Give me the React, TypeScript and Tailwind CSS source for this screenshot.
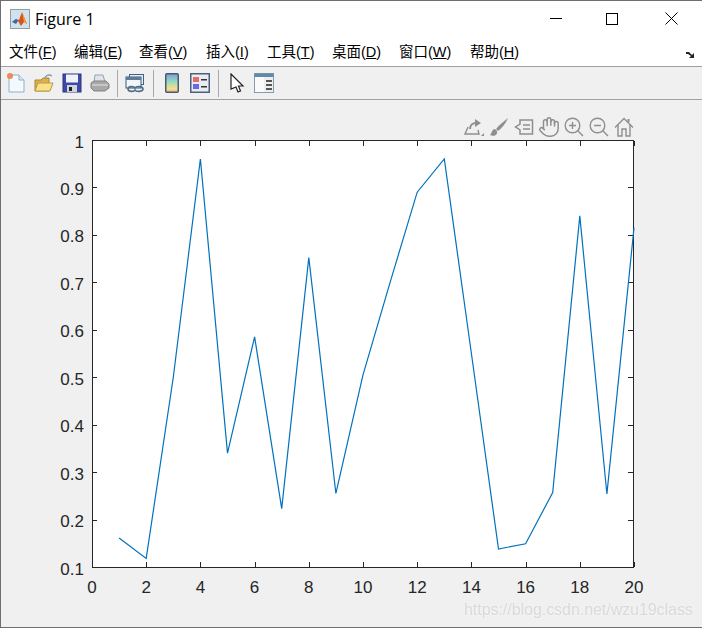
import { Hand } from "lucide-react";
import type { ReactNode } from "react";

const menus: [string, string, string][] = [
  ["文件", "F", "w-[65px]"],
  ["编辑", "E", "w-[65px]"],
  ["查看", "V", "w-[67px]"],
  ["插入", "I", "w-[61px]"],
  ["工具", "T", "w-[65px]"],
  ["桌面", "D", "w-[67px]"],
  ["窗口", "W", "w-[71px]"],
  ["帮助", "H", "w-[60px]"],
];

const data: [number, number][] = [
  [1, 0.161], [2, 0.118], [3, 0.5], [4, 0.96], [5, 0.34], [6, 0.585], [7, 0.223],
  [8, 0.752], [9, 0.255], [10, 0.505], [11, 0.7], [12, 0.89], [13, 0.96], [14, 0.55],
  [15, 0.138], [16, 0.149], [17, 0.257], [18, 0.84], [19, 0.254], [20, 0.815],
];

const px = (x: number) => 92 + (x / 20) * 542;
const py = (y: number) => 568 - ((y - 0.1) / 0.9) * 427;

const xTicks = [0, 2, 4, 6, 8, 10, 12, 14, 16, 18, 20];
const yTicks = [0.1, 0.2, 0.3, 0.4, 0.5, 0.6, 0.7, 0.8, 0.9, 1];

function Tool({ children, w = "w-[28px]" }: { children: ReactNode; w?: string }) {
  return <div className={`${w} flex h-full items-center justify-center`}>{children}</div>;
}

function Sep({ w }: { w: string }) {
  return (
    <div className={`${w} flex h-full items-center justify-center`}>
      <div className="h-[27px] w-px bg-[#a8a8a8]" />
    </div>
  );
}

function MatlabIcon() {
  return (
    <svg width="20" height="20" viewBox="0 0 20 20">
      <rect x="0.5" y="0.5" width="19" height="19" fill="#cfe2f0" stroke="#9a9a9a" />
      <path d="M2 13 L6 10 L9 11 L12 3 L17 15 L14 13 L11 17 L8 12 Z" fill="#d9531e" />
      <path d="M2 13 L6 10 L8 12 L6 15 Z" fill="#2f6fa8" />
      <path d="M12 3 L17 15 L14 13 Z" fill="#f0a32a" />
    </svg>
  );
}

function Toolbar() {
  return (
    <div className="flex h-[33px] items-center border-b border-[#a0a0a0] bg-[#f0f0f0] pl-px">
      <Tool>
        <svg width="20" height="22" viewBox="0 0 20 22">
          <path d="M3 3 H13 L18 8 V20 H3 Z" fill="#f4f9fd" stroke="#8fb0cc" />
          <path d="M13 3 V8 H18" fill="#d6e6f2" stroke="#8fb0cc" />
          <circle cx="4" cy="4" r="3" fill="#ee8a5a" />
        </svg>
      </Tool>
      <Tool>
        <svg width="20" height="20" viewBox="0 0 20 20">
          <path d="M1 7 H7 L9 5 H15 V18 H1 Z" fill="#dcb04a" stroke="#a9873a" />
          <path d="M1 18 L4 10 H19 L16 18 Z" fill="#fbe08a" stroke="#b89a48" />
          <path d="M11 5 C12 2 15 1 18 3" fill="none" stroke="#7f9cb4" strokeWidth="1.5" />
        </svg>
      </Tool>
      <Tool>
        <svg width="20" height="20" viewBox="0 0 20 20">
          <rect x="1" y="1" width="18" height="18" fill="#3d48a8" stroke="#2b3480" />
          <rect x="4" y="1.5" width="12" height="8" fill="#f0f2fa" />
          <rect x="5" y="12" width="10" height="7" fill="#d0d2dc" />
          <rect x="7" y="14" width="3" height="4" fill="#222" />
        </svg>
      </Tool>
      <Tool>
        <svg width="20" height="20" viewBox="0 0 20 20">
          <path d="M5 2 H13 L15 9 H4 Z" fill="#dfe5ea" stroke="#9aa2a8" />
          <path d="M1 10 L4 8 H16 L19 11 V15 L15 18 H4 L1 15 Z" fill="#a8a8a8" stroke="#808080" />
          <path d="M2 12 H18" stroke="#e4e4e4" />
        </svg>
      </Tool>
      <Sep w="w-[7px]" />
      <Tool>
        <svg width="20" height="20" viewBox="0 0 20 20">
          <rect x="4.5" y="1.5" width="14" height="10" fill="#e8eef4" stroke="#44607c" />
          <rect x="1" y="4" width="15" height="11" fill="#f2f6fa" stroke="#3c5a78" />
          <rect x="1" y="4" width="15" height="3" fill="#5c7c9c" />
          <path d="M3 16 C3 13 9 13 10 15 C11 13 18 13 18 16 C18 19 11 19 10 17 C9 19 3 19 3 16 Z" fill="none" stroke="#506c88" strokeWidth="1.6" />
        </svg>
      </Tool>
      <Sep w="w-[9px]" />
      <Tool>
        <svg width="14" height="20" viewBox="0 0 14 20">
          <defs>
            <linearGradient id="cbar" x1="0" y1="0" x2="0" y2="1">
              <stop offset="0" stopColor="#7d9fd8" />
              <stop offset="0.45" stopColor="#9adcc0" />
              <stop offset="0.8" stopColor="#f4e08a" />
              <stop offset="1" stopColor="#eeb0a0" />
            </linearGradient>
          </defs>
          <rect x="0.75" y="0.75" width="12.5" height="18.5" rx="1" fill="url(#cbar)" stroke="#4a5a70" strokeWidth="1.5" />
        </svg>
      </Tool>
      <Tool w="w-[27px]">
        <svg width="20" height="20" viewBox="0 0 20 20">
          <rect x="0.75" y="0.75" width="18.5" height="18.5" fill="#e8edf4" stroke="#4c607c" strokeWidth="1.5" />
          <rect x="3" y="4" width="6" height="5" fill="#e86a6a" />
          <rect x="3" y="11" width="6" height="5" fill="#6a6ae0" />
          <rect x="11" y="6" width="6" height="1.5" fill="#333" />
          <rect x="11" y="13" width="6" height="1.5" fill="#333" />
        </svg>
      </Tool>
      <Sep w="w-[10px]" />
      <Tool w="w-[27px]">
        <svg width="16" height="20" viewBox="0 0 16 20">
          <path d="M2 1 L14 13 H9.5 L11.5 18 L9 19 L7 14 L2 16 Z" fill="#ffffff" stroke="#222" strokeWidth="1.2" />
        </svg>
      </Tool>
      <Tool w="w-[27px]">
        <svg width="20" height="20" viewBox="0 0 20 20">
          <rect x="0.5" y="0.5" width="19" height="19" fill="#eeeeee" stroke="#8a9aa6" />
          <rect x="0.5" y="0.5" width="19" height="3.5" fill="#5f8aa8" />
          <rect x="1" y="4" width="9" height="15" fill="#fafafa" />
          <rect x="12" y="7" width="6" height="2" fill="#555" />
          <rect x="12" y="11" width="6" height="2" fill="#555" />
          <rect x="12" y="15" width="6" height="2" fill="#555" />
        </svg>
      </Tool>
    </div>
  );
}

function AxesToolbar() {
  return (
    <div className="absolute left-[460px] top-[16px] flex h-[22px] items-center text-[#8e8e8e]">
      <div className="flex w-[25px] justify-center">
        <svg width="22" height="20" viewBox="0 0 22 20" fill="none" stroke="currentColor" strokeWidth="1.4">
          <path d="M5 10 L2 17 H16 L15 13" />
          <path d="M7 12 C7 8 10 6 13 6" strokeWidth="2" />
          <path d="M12 2 L18 6 L12 10 Z" fill="currentColor" stroke="none" />
          <path d="M18 19 L21 19 L21 16 Z" fill="currentColor" stroke="none" />
        </svg>
      </div>
      <div className="flex w-[25px] justify-center">
        <svg width="20" height="20" viewBox="0 0 20 20">
          <path d="M19 1 C15 4 10 8 7 12 L9 14 C13 11 17 6 19 1 Z" fill="currentColor" />
          <path d="M6 12 C3 12 3 16 1 18 C5 20 9 18 8 14 Z" fill="currentColor" />
        </svg>
      </div>
      <div className="flex w-[25px] justify-center">
        <svg width="20" height="18" viewBox="0 0 20 18" fill="none" stroke="currentColor" strokeWidth="1.5">
          <path d="M6 2 H18.5 V16 H6 V12 L1.5 9 L6 6 Z" />
          <path d="M9 7 H16 M9 11 H16" />
        </svg>
      </div>
      <div className="flex w-[25px] justify-center">
        <Hand size={22} strokeWidth={1.6} />
      </div>
      <div className="flex w-[25px] justify-center">
        <svg width="20" height="20" viewBox="0 0 20 20" fill="none" stroke="currentColor" strokeWidth="1.4">
          <circle cx="8.5" cy="8.5" r="7.3" />
          <path d="M13.8 13.8 L19 19 M5 8.5 H12 M8.5 5 V12" />
        </svg>
      </div>
      <div className="flex w-[25px] justify-center">
        <svg width="20" height="20" viewBox="0 0 20 20" fill="none" stroke="currentColor" strokeWidth="1.4">
          <circle cx="8.5" cy="8.5" r="7.3" />
          <path d="M13.8 13.8 L19 19 M5 8.5 H12" />
        </svg>
      </div>
      <div className="flex w-[25px] justify-center">
        <svg width="20" height="20" viewBox="0 0 20 20" fill="none" stroke="currentColor" strokeWidth="1.4">
          <path d="M1 10.5 L10 1.5 L19 10.5" />
          <path d="M14.5 2 V5" strokeWidth="2" />
          <path d="M4 8 V19 H8 V12 H12 V19 H16 V8" />
        </svg>
      </div>
    </div>
  );
}

function Plot() {
  return (
    <svg width="702" height="527" viewBox="0 101 702 527" className="block">
      <rect x="92.5" y="141.5" width="541" height="427" fill="#ffffff" stroke="#262626" />
      {xTicks.map((t) => (
        <g key={t}>
          <path d={`M${Math.round(px(t)) + 0.5} 568 v-5 M${Math.round(px(t)) + 0.5} 142 v5`} stroke="#262626" fill="none" />
          <text x={px(t)} y={594} textAnchor="middle" fontSize="17" fill="#262626" fontFamily="'Liberation Sans', sans-serif">
            {t}
          </text>
        </g>
      ))}
      {yTicks.map((t) => (
        <g key={t}>
          <path d={`M92 ${Math.round(py(t)) + 0.5} h5 M633 ${Math.round(py(t)) + 0.5} h-5`} stroke="#262626" fill="none" />
          <text x={84} y={py(t) + 7.5} textAnchor="end" fontSize="17" fill="#262626" fontFamily="'Liberation Sans', sans-serif">
            {t}
          </text>
        </g>
      ))}
      <polyline
        points={data.map(([x, y]) => `${px(x)},${py(y)}`).join(" ")}
        fill="none"
        stroke="#0072bd"
        strokeWidth="1.2"
        strokeLinejoin="miter"
      />
    </svg>
  );
}

export default function App() {
  return (
    <div className="h-[628px] w-[702px] overflow-hidden bg-[#f0f0f0]">
      <div className="flex h-full w-full flex-col border border-[#6e6e6e] border-r-0">
        <div className="flex h-[36px] items-center bg-white pl-[9px]">
          <MatlabIcon />
          <span className="ml-[5px] font-['Open_Sans',sans-serif] text-[16px] text-black">Figure 1</span>
          <div className="ml-auto flex items-center">
            <div className="flex w-[58px] justify-center">
              <div className="h-px w-[12px] bg-black" />
            </div>
            <div className="flex w-[58px] justify-center pr-[4px]">
              <div className="h-[12px] w-[12px] border border-black" />
            </div>
            <div className="flex w-[59px] justify-center pr-[2px]">
              <svg width="13" height="13" viewBox="0 0 13 13" stroke="black" strokeWidth="1">
                <path d="M0.5 0.5 L12.5 12.5 M12.5 0.5 L0.5 12.5" />
              </svg>
            </div>
          </div>
        </div>
        <div className="relative flex h-[31px] items-start border-b border-[#a0a0a0] bg-white pl-[8px] font-['Liberation_Sans','Noto_Sans_CJK_SC',sans-serif] text-[14.5px] leading-[33px] text-black">
          {menus.map(([name, key, w]) => (
            <span key={key} className={w}>
              {name}(<span className="underline">{key}</span>)
            </span>
          ))}
          <svg width="10" height="8" viewBox="0 0 10 8" className="absolute right-[6px] top-[15px]">
            <path d="M0 1 H3 L6 4 L8 2 V7 H3 L5 5 L2 3 H0 Z" fill="#222" />
          </svg>
        </div>
        <Toolbar />
        <div className="relative flex-1 bg-[#f0f0f0]">
          <div className="-ml-px">
            <Plot />
          </div>
          <AxesToolbar />
          <span className="absolute left-[463px] top-[498px] whitespace-nowrap font-['Liberation_Sans',sans-serif] text-[15.9px] text-[#d9d9d9] [text-shadow:0_0_2px_#ffffff]">
            https://blog.csdn.net/wzu19class
          </span>
        </div>
      </div>
    </div>
  );
}
